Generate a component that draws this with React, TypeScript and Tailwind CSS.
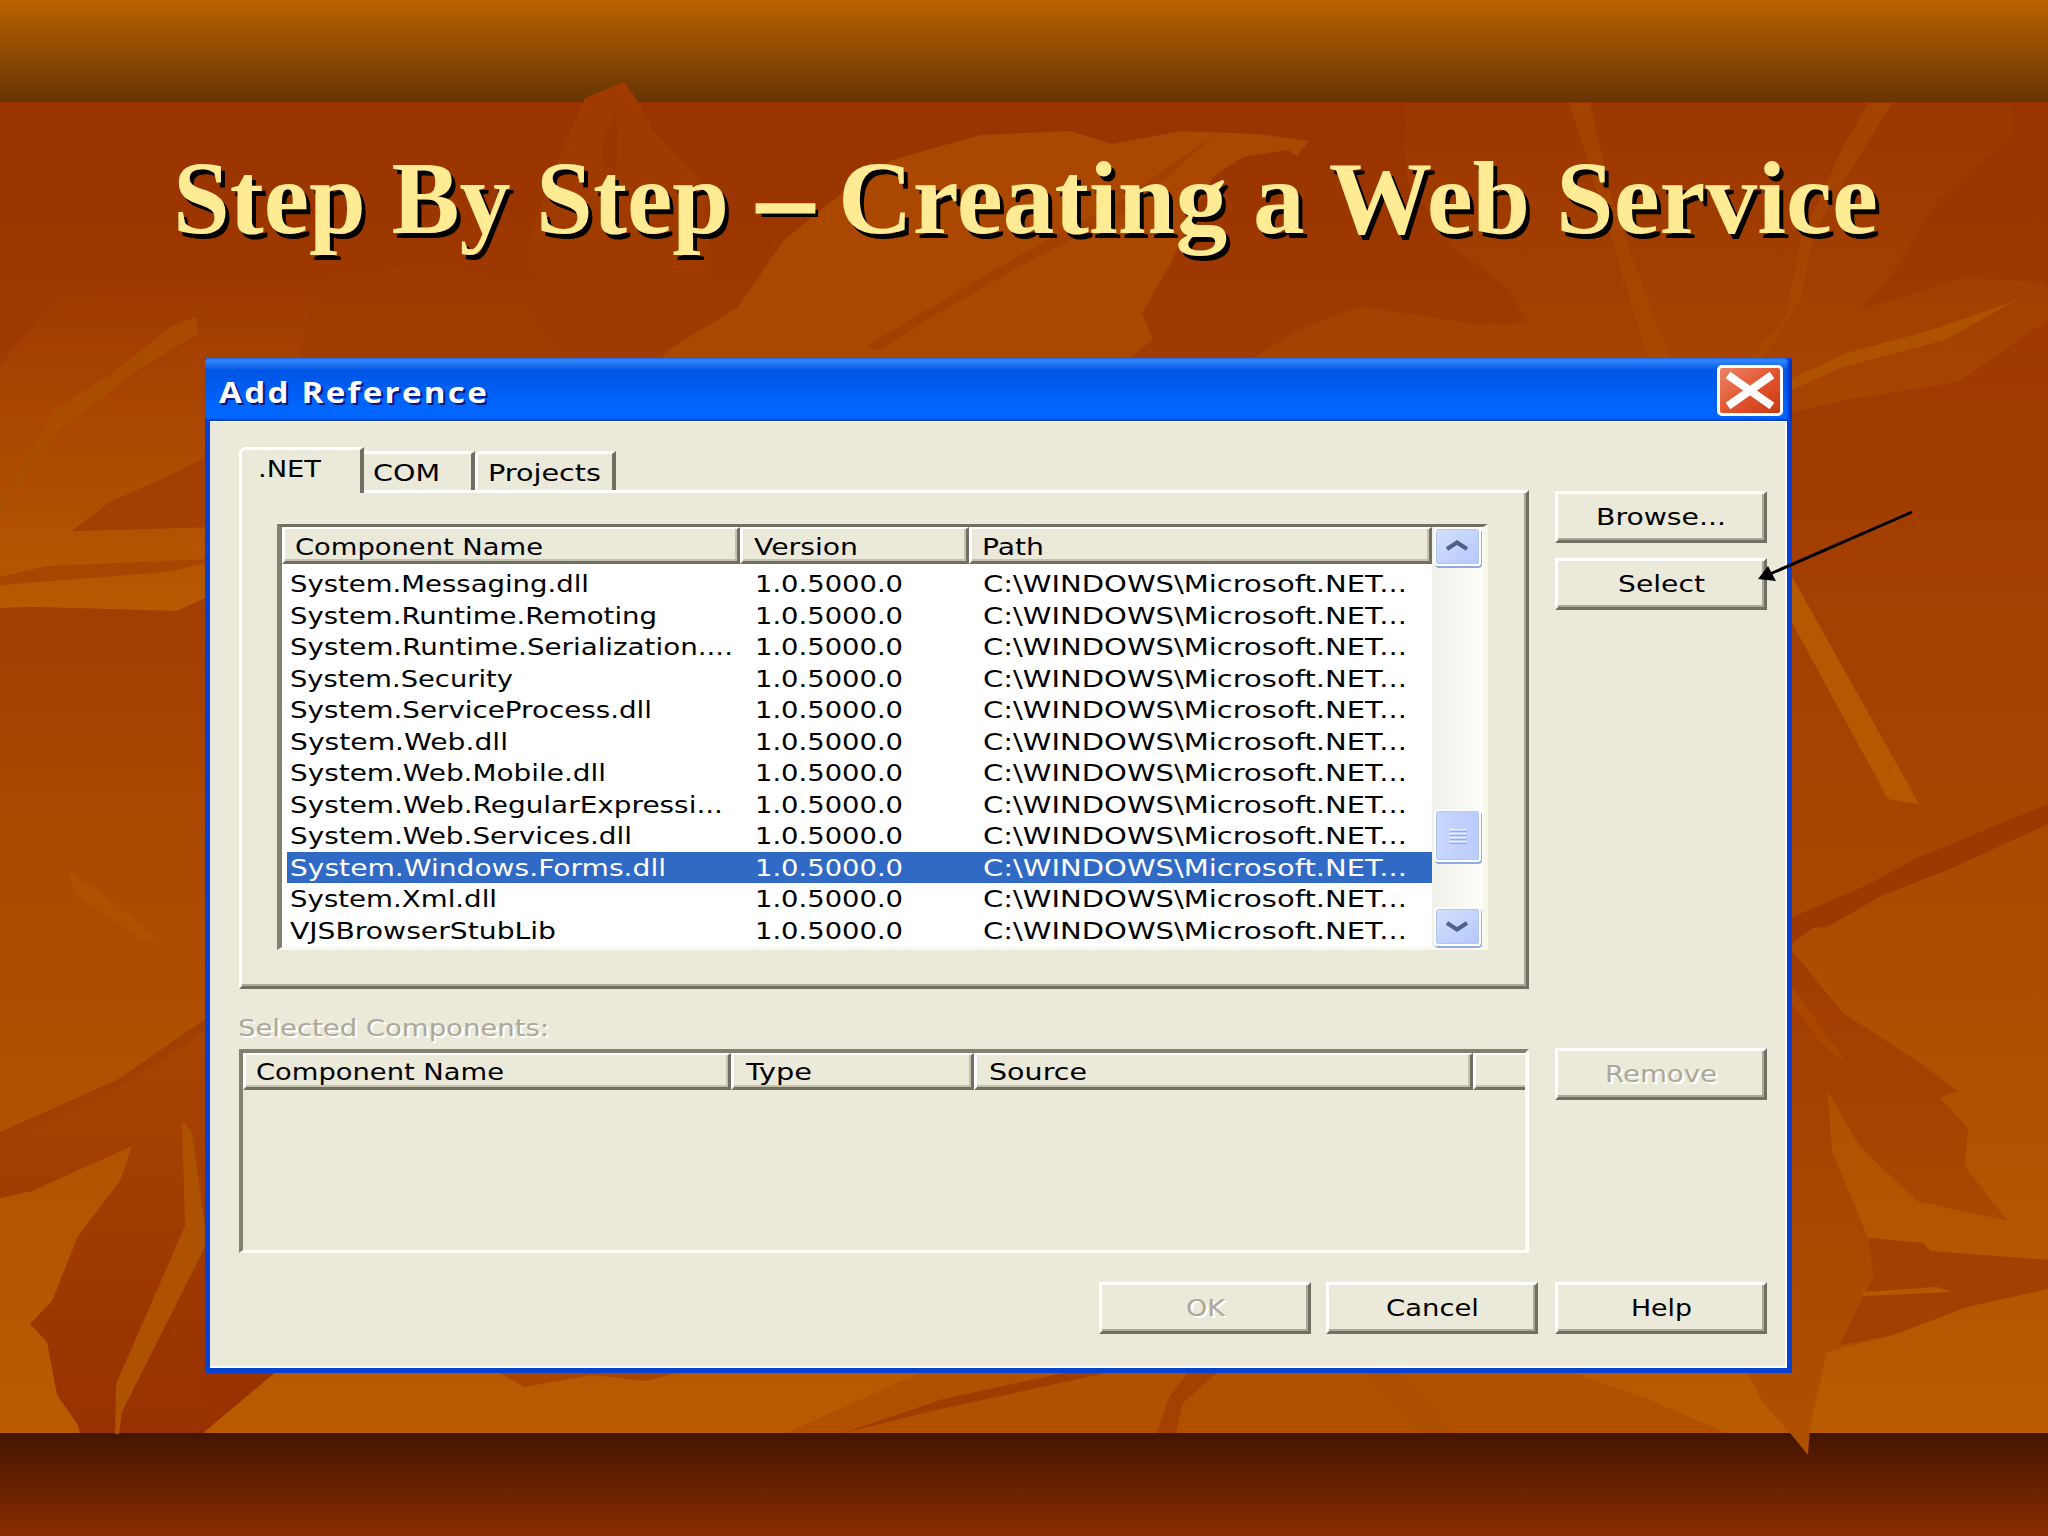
import { FC, ReactNode, useLayoutEffect, useRef, useState } from 'react';
import clsx from 'clsx';

type FitProps = {
    width: number;
    className?: string;
    children: ReactNode;
};

// stretches a single line of text to the given width
const Fit: FC<FitProps> = ({ width, className, children }) => {
    const ref = useRef<HTMLSpanElement>(null);
    const [scale, setScale] = useState(1);

    useLayoutEffect(() => {
        if (!ref.current) return;
        ref.current.style.transform = 'none';
        const natural = ref.current.getBoundingClientRect().width;
        ref.current.style.transform = `scaleX(${width / natural})`;
        setScale(width / natural);
    }, [width, children]);

    return (
        <span className="block text-left" style={{ width }}>
            <span
                ref={ref}
                className={clsx(
                    'inline-block origin-left whitespace-nowrap align-top',
                    className
                )}
                style={{ transform: `scaleX(${scale})` }}
            >
                {children}
            </span>
        </span>
    );
};

const components = [
    { name: 'System.Messaging.dll', width: 299 },
    { name: 'System.Runtime.Remoting', width: 367 },
    { name: 'System.Runtime.Serialization....', width: 443 },
    { name: 'System.Security', width: 223 },
    { name: 'System.ServiceProcess.dll', width: 362 },
    { name: 'System.Web.dll', width: 218 },
    { name: 'System.Web.Mobile.dll', width: 316 },
    { name: 'System.Web.RegularExpressi...', width: 433 },
    { name: 'System.Web.Services.dll', width: 342 },
    { name: 'System.Windows.Forms.dll', width: 376 },
    { name: 'System.Xml.dll', width: 207 },
    { name: 'VJSBrowserStubLib', width: 266 },
];

const SELECTED = 'System.Windows.Forms.dll';

type DialogButtonProps = {
    label: string;
    width: number;
    disabled?: boolean;
};

const DialogButton: FC<DialogButtonProps> = ({ label, width, disabled }) => (
    <button
        disabled={disabled}
        className="flex h-[52px] w-[212px] shrink-0 items-center justify-center border-t-[3px] border-r-[3px] border-b-[3px] border-l-[3px] border-t-white border-r-[#716f64] border-b-[#716f64] border-l-white bg-[#ebe9d9] shadow-[inset_-2px_-2px_0_#aca899]"
    >
        <Fit
            width={width}
            className={clsx(
                disabled && 'text-[#aca899] [text-shadow:2px_2px_0_#fff]'
            )}
        >
            {label}
        </Fit>
    </button>
);

type HeaderCellProps = {
    label: string;
    width: number;
    className: string;
};

const HeaderCell: FC<HeaderCellProps> = ({ label, width, className }) => (
    <div
        className={clsx(
            'flex shrink-0 items-center border-t-2 border-r-[3px] border-b-[3px] border-l-[3px] border-t-white border-r-[#716f64] border-b-[#716f64] border-l-white bg-[#ebe9d9] shadow-[inset_-2px_-2px_0_#c5c2b0]',
            className
        )}
    >
        {label && <Fit width={width}>{label}</Fit>}
    </div>
);

const ScrollButton: FC<{ up?: boolean }> = ({ up }) => (
    <div className="h-[39px] w-[47px] shrink-0 rounded-[4px] border-2 border-white bg-linear-to-br from-[#d5e0fd] to-[#b3c8fb] shadow-[1px_2px_0_#8eabe4,inset_0_0_0_1px_#b4c6f0]">
        <svg viewBox="0 0 43 35" className="size-full">
            <path
                d={up ? 'M11 20 L21 13.5 L31 20' : 'M11 14 L21 20.5 L31 14'}
                fill="none"
                stroke="#4d6185"
                strokeWidth="4"
            />
        </svg>
    </div>
);

const Scrollbar: FC = () => (
    <div className="flex w-[51px] flex-col items-center bg-linear-to-r from-[#f0f0ea] to-[#fefefb]">
        <ScrollButton up />
        <div className="h-[243px] shrink-0" />
        <div className="flex h-[53px] w-[47px] shrink-0 flex-col items-center justify-center gap-[3px] rounded-[4px] border-2 border-white bg-linear-to-r from-[#c9d7fd] to-[#b9ccfc] shadow-[1px_2px_0_#8eabe4,inset_0_0_0_1px_#b4c6f0]">
            {[0, 1, 2, 3].map((line) => (
                <div
                    key={line}
                    className="h-px w-[17px] bg-[#eef4fe] shadow-[1px_2px_0_#8cb0f8]"
                />
            ))}
        </div>
        <div className="h-[45px] shrink-0" />
        <ScrollButton />
    </div>
);

const Leaves: FC = () => (
    <svg
        viewBox="0 0 2048 1536"
        className="absolute inset-0 h-[1536px] w-[2048px]"
    >
        <defs>
            <linearGradient id="sky" x1="0" y1="0" x2="0" y2="1">
                <stop offset="0" stopColor="#bb6200" />
                <stop offset="1" stopColor="#663404" />
            </linearGradient>
            <linearGradient id="ground" x1="0" y1="0" x2="0" y2="1">
                <stop offset="0" stopColor="#431500" />
                <stop offset="1" stopColor="#8a2c00" />
            </linearGradient>
            <linearGradient id="field" x1="0" y1="0" x2="0" y2="1">
                <stop offset="0" stopColor="#993300" />
                <stop offset="1" stopColor="#b95b00" />
            </linearGradient>
            <linearGradient id="leftLeaf" x1="0" y1="0" x2="0" y2="1">
                <stop offset="0" stopColor="#9f3900" />
                <stop offset="1" stopColor="#b95900" />
            </linearGradient>
            <linearGradient id="leftShade" x1="0" y1="0" x2="0" y2="1">
                <stop offset="0" stopColor="#a23e00" />
                <stop offset="1" stopColor="#a23e00" stopOpacity="0" />
            </linearGradient>
            <linearGradient id="rightLeaf" x1="0" y1="0" x2="0" y2="1">
                <stop offset="0" stopColor="#9b3700" />
                <stop offset="1" stopColor="#a84500" />
            </linearGradient>
            <linearGradient id="rightShade" x1="0" y1="0" x2="0" y2="1">
                <stop offset="0" stopColor="#9f3900" />
                <stop offset="1" stopColor="#a94700" />
            </linearGradient>
            <linearGradient id="darkLeaf" x1="0" y1="0" x2="0" y2="1">
                <stop offset="0" stopColor="#a84500" />
                <stop offset="1" stopColor="#983100" />
            </linearGradient>
            <linearGradient id="stem" x1="0" y1="0" x2="0" y2="1">
                <stop offset="0" stopColor="#a13c00" />
                <stop offset=".5" stopColor="#a94600" />
                <stop offset="1" stopColor="#b05000" />
            </linearGradient>
        </defs>

        <rect width="2048" height="102" fill="url(#sky)" />
        <rect y="102" width="2048" height="1332" fill="url(#field)" />
        <rect y="1433" width="2048" height="103" fill="url(#ground)" />

        {/* top middle */}
        <path
            fill="#a03b00"
            d="M585 98 L624 82 L637 100 L653 130 L702 180 L712 263 L663 358 H570 L526 247 L558 160Z"
        />
        <path fill="#9b3600" d="M617 107 L601 143 L603 165 L618 170Z" />
        <path
            fill="#aa4700"
            d="M668 350 L738 307 L784 240 L842 193 L892 160 L980 135 L1024 133 L1070 131 L1112 144 L1181 131 L1259 134 L1309 141 L1297 156 L1288 150 L1243 157 L1213 177 L1195 210 L1171 263 L1142 313 L1153 339 L1128 360 H660Z"
        />
        <path
            fill="#a24000"
            d="M1217 133 L1122 200 L1024 253 L930 308 L865 347 L880 350 L940 312 L1024 264 L1130 210Z"
        />
        <path
            fill="#a13d00"
            d="M300 358 L320 280 L440 262 L520 290 L560 358Z"
            opacity=".6"
        />

        {/* top right */}
        <path
            fill="url(#rightLeaf)"
            d="M1406 103 H2013 V133 L1938 200 L1893 273 L1862 309 L1964 278 L2043 282 L2048 290 V320 L1958 382 L1847 400 L1780 415 L1250 360 L1298 330 L1360 306 L1481 325 L1527 323 L1507 287 L1452 247 L1406 180Z"
        />
        <path
            fill="#a84b00"
            d="M1612 200 L1638 273 L1671 360 H1648 L1612 240 L1579 133 L1569 103 H1590Z"
            opacity=".6"
        />
        <path
            fill="#a84b00"
            d="M1893 103 L1863 150 L1814 233 L1801 300 L1762 360 H1749 L1785 317 L1801 240 L1840 153 L1868 103Z"
            opacity=".6"
        />
        <path
            fill="#ac5200"
            d="M2017 300 L1938 328 L1847 353 L1790 379 V391 L1840 368 L1945 340Z"
        />

        {/* right side */}
        <path
            fill="url(#rightShade)"
            d="M1780 415 L1847 400 L1958 382 L2048 320 V804 L1917 858 L1867 885 L1790 918Z"
        />
        <path fill="#b65800" d="M1790 573 L1919 804 L1888 799 L1790 619Z" />
        <path
            fill="#9d3800"
            d="M1790 918 L1867 885 L1917 858 L2048 804 V824 L1950 869 L1883 895 L1827 927 L1813 928 L1790 945Z"
        />
        <path
            fill="url(#stem)"
            d="M1790 948 L1843 1013 L1917 1061 L1958 1091 L1940 1098 L1968 1128 L1965 1167 L2008 1221 L1917 1201 L1860 1147 L1828 1092 L1832 1151 L1868 1238 L1923 1243 L1930 1251 L2048 1260 V1289 L1967 1307 L1893 1335 L1827 1352 L1810 1427 L1808 1455 L1790 1433 L1763 1403 L1746 1370 H1790Z"
        />
        <path
            fill="#ac4a00"
            d="M1790 983 L1850 1068 L1820 1042 L1790 1001Z"
            opacity=".7"
        />
        <path
            fill="#a33f00"
            d="M1868 1238 L1923 1243 L1930 1251 L2048 1260 V1289 L1967 1307 L1893 1335 L1840 1345 L1863 1296 L1874 1277Z"
        />
        <path fill="#b65800" d="M1863 1292 L1937 1287 L1952 1292 L1863 1296Z" />

        {/* left side */}
        <path
            fill="url(#leftLeaf)"
            d="M0 365 L62 293 L200 283 L320 280 L300 358 H210 V455 L180 471 L110 502 L72 531 L210 527 V596 L177 611 L35 607 L0 608Z"
        />
        <path
            fill="#a95000"
            d="M0 502 L55 409 L110 375 L170 327 L196 317 L199 333 L133 373 L78 417 L60 429 L0 516Z"
            opacity=".75"
        />
        <path
            fill="#a33f00"
            d="M72 531 L110 502 L180 471 L210 454 V527Z"
        />
        <path
            fill="#a64600"
            d="M0 577 L47 566 L210 559 V562 L167 572 L0 585Z"
        />
        <path
            fill="url(#leftShade)"
            d="M0 608 L35 607 L177 611 L210 596 V800 H0Z"
        />
        <path
            fill="#b05000"
            d="M68 870 L100 892 L167 945 L143 941 L75 894Z"
        />
        <path
            fill="url(#darkLeaf)"
            d="M0 1138 L117 1089 L210 1025 V1400 L240 1400 L203 1433 H80 L78 1425 L57 1395 L47 1342 L30 1324 L52 1301 L78 1236 L120 1181 L132 1146 L32 1191 L0 1198Z"
        />
        <path
            fill="#a04000"
            d="M0 1132 L117 1080 L210 1016 V1028 L117 1089 L33 1129 L0 1138Z"
        />
        <path
            fill="#ac5200"
            d="M182 1121 L192 1132 L206 1234 V1245 L122 1412 L119 1434 H115 L116 1384 L185 1226Z"
        />

        {/* bottom edge */}
        <path fill="#993200" d="M205 1370 H278 L203 1433Z" />
        <path
            fill="#a94400"
            d="M498 1372 L524 1387 L592 1375 L645 1381 L681 1372Z"
        />
        <path fill="#b15100" d="M922 1372 H1570 L1650 1400 L1727 1433 H786Z" />
        <path
            fill="#a03c00"
            d="M843 1433 L943 1399 L1068 1372 H1110 L932 1411Z"
        />
        <path
            fill="#a34200"
            d="M1188 1372 H1218 L1183 1403 L1176 1433 H1157 L1168 1399Z"
        />
        <path fill="#ac4f00" d="M1365 1372 H1402 L1450 1433 H1425Z" />
    </svg>
);

const App: FC = () => (
    <div className="relative h-[1536px] w-[2048px] overflow-hidden bg-[#993300]">
        <Leaves />

        <div className="relative flex h-full flex-col">
            <h1 className="mt-[138px] ml-[173px] flex h-[120px] font-['Liberation_Serif',serif] text-[103px] leading-[120px] font-bold text-[#ffeb94] [text-shadow:4px_5px_0_#000]">
                <Fit width={556}>Step By Step</Fit>
                <span className="ml-[29px] block">
                    <Fit
                        width={55}
                        className="[-webkit-text-stroke:3px_#ffeb94]"
                    >
                        –
                    </Fit>
                </span>
                <span className="ml-[25px] block">
                    <Fit width={1040}>Creating a Web Service</Fit>
                </span>
            </h1>

            <div className="mt-[100px] ml-[205px] flex h-[1015px] w-[1587px] flex-col bg-[#0842d0] font-['DejaVu_Sans',sans-serif] text-[23px] leading-[27px] text-black">
                <div className="flex h-[63px] shrink-0 justify-between rounded-t-[4px] bg-linear-to-b from-[#3c92ff] via-[#0055e5] via-20% to-[#0066ff] to-80% pr-[9px] pl-[14px] shadow-[inset_0_-2px_1px_#0040c8,inset_-4px_0_3px_#0030c8]">
                    <div className="pt-[18px] font-['Open_Sans',sans-serif] text-[29px] leading-8 font-bold tracking-[2px] text-white [text-shadow:2px_2px_0_#0a1883]">
                        <Fit width={270}>Add Reference</Fit>
                    </div>
                    <div className="mt-[7px] h-[51px] w-[66px] rounded-[5px] border-[3px] border-white bg-linear-to-br from-[#ea8468] via-[#e2562f] to-[#c8380c]">
                        <svg viewBox="0 0 60 45" className="size-full">
                            <path
                                d="M8 7 L52 38 M52 7 L8 38"
                                stroke="#fff"
                                strokeWidth="8"
                            />
                        </svg>
                    </div>
                </div>

                <div className="mx-[5px] mb-[5px] flex flex-1 flex-col border-t border-r-2 border-b-2 border-white bg-[#ebe9d9] pr-[17px] pl-[29px]">
                    <div className="flex h-[600px] shrink-0 justify-between">
                        <div className="w-[1290px] pt-[25px]">
                            {/* the active tab overlaps the panel's top edge */}
                            <div className="relative flex h-[43px] items-end">
                                <div className="-mb-[3px] h-[46px] w-[125px] rounded-tl-[6px] border-t-[3px] border-r-[4px] border-l-[3px] border-t-white border-r-[#716f64] border-l-white bg-[#ebe9d9] pt-[6px] pl-[16px]">
                                    <Fit width={63}>.NET</Fit>
                                </div>
                                <div className="h-[39px] w-[111px] border-t-[3px] border-r-[4px] border-t-white border-r-[#716f64] pt-[6px] pl-[9px]">
                                    <Fit width={67}>COM</Fit>
                                </div>
                                <div className="h-[39px] w-[141px] rounded-tl-[6px] border-t-[3px] border-r-[4px] border-l-[3px] border-t-white border-r-[#716f64] border-l-white pt-[6px] pl-[10px]">
                                    <Fit width={113}>Projects</Fit>
                                </div>
                            </div>

                            <div className="h-[499px] border-t-[3px] border-r-[3px] border-b-[3px] border-l-[3px] border-t-white border-r-[#716f64] border-b-[#716f64] border-l-white pt-[31px] pl-[35px] shadow-[inset_-2px_-2px_0_#aca899]">
                                <div className="flex h-[426px] w-[1211px] border-t-[3px] border-r-[5px] border-b-[3px] border-l-[5px] border-t-[#716f64] border-r-[#f9f7ea] border-b-[#fbf9ee] border-l-[#83806f] bg-white">
                                    <div className="w-[1150px]">
                                        <div className="flex h-[37px]">
                                            <HeaderCell
                                                label="Component Name"
                                                width={248}
                                                className="w-[458px] pt-[5px] pl-[10px]"
                                            />
                                            <HeaderCell
                                                label="Version"
                                                width={104}
                                                className="w-[229px] pt-[5px] pl-[11px]"
                                            />
                                            <HeaderCell
                                                label="Path"
                                                width={62}
                                                className="w-[463px] pt-[5px] pl-[10px]"
                                            />
                                        </div>
                                        <ul className="pt-[4px]">
                                            {components.map(({ name, width }) => (
                                                <li
                                                    key={name}
                                                    className={clsx(
                                                        'ml-[5px] flex h-[31.5px] items-center pt-[2px] pl-[3px]',
                                                        name === SELECTED &&
                                                            'bg-[#316ac5] text-white'
                                                    )}
                                                >
                                                    <div className="w-[465px]">
                                                        <Fit width={width}>{name}</Fit>
                                                    </div>
                                                    <div className="w-[228px]">
                                                        <Fit width={148}>1.0.5000.0</Fit>
                                                    </div>
                                                    <Fit width={424}>
                                                        C:\WINDOWS\Microsoft.NET...
                                                    </Fit>
                                                </li>
                                            ))}
                                        </ul>
                                    </div>
                                    <Scrollbar />
                                </div>
                            </div>
                        </div>

                        <div className="flex flex-col gap-[15px] pt-[69px] pr-px">
                            <DialogButton label="Browse..." width={130} />
                            <DialogButton label="Select" width={87} />
                        </div>
                    </div>

                    <div className="flex h-[232px] shrink-0 justify-between">
                        <div className="w-[1290px]">
                            <div className="-mt-[7px] mb-[7px] -ml-px h-[27px] text-[#aca899] [text-shadow:2px_2px_0_#fff]">
                                <Fit width={311}>Selected Components:</Fit>
                            </div>
                            <div className="h-[204px] border-t-[4px] border-r-[4px] border-b-[3px] border-l-[4px] border-t-[#83806f] border-r-[#fffef5] border-b-[#fffef5] border-l-[#83806f]">
                                <div className="flex h-[37px] overflow-hidden">
                                    <HeaderCell
                                        label="Component Name"
                                        width={248}
                                        className="w-[488px] pt-[3px] pl-[10px]"
                                    />
                                    <HeaderCell
                                        label="Type"
                                        width={66}
                                        className="w-[243px] pt-[3px] pl-[12px]"
                                    />
                                    <HeaderCell
                                        label="Source"
                                        width={98}
                                        className="w-[499px] pt-[3px] pl-[12px]"
                                    />
                                    <HeaderCell
                                        label=""
                                        width={0}
                                        className="w-[60px]"
                                    />
                                </div>
                            </div>
                        </div>
                        <div className="pt-[26px] pr-px">
                            <DialogButton label="Remove" width={112} disabled />
                        </div>
                    </div>

                    <div className="flex justify-end pt-[28px] pr-px">
                        <DialogButton label="OK" width={39} disabled />
                        <div className="w-[15px]" />
                        <DialogButton label="Cancel" width={93} />
                        <div className="w-[17px]" />
                        <DialogButton label="Help" width={61} />
                    </div>
                </div>
            </div>
        </div>

        {/* callout arrow pointing at Select */}
        <svg
            viewBox="0 0 170 90"
            className="absolute top-[500px] left-[1750px] h-[90px] w-[170px]"
        >
            <path d="M162 12 L20 74" stroke="#000" strokeWidth="3" />
            <path d="M8 79 L18 66 L26 81Z" />
        </svg>
    </div>
);

export default App;
